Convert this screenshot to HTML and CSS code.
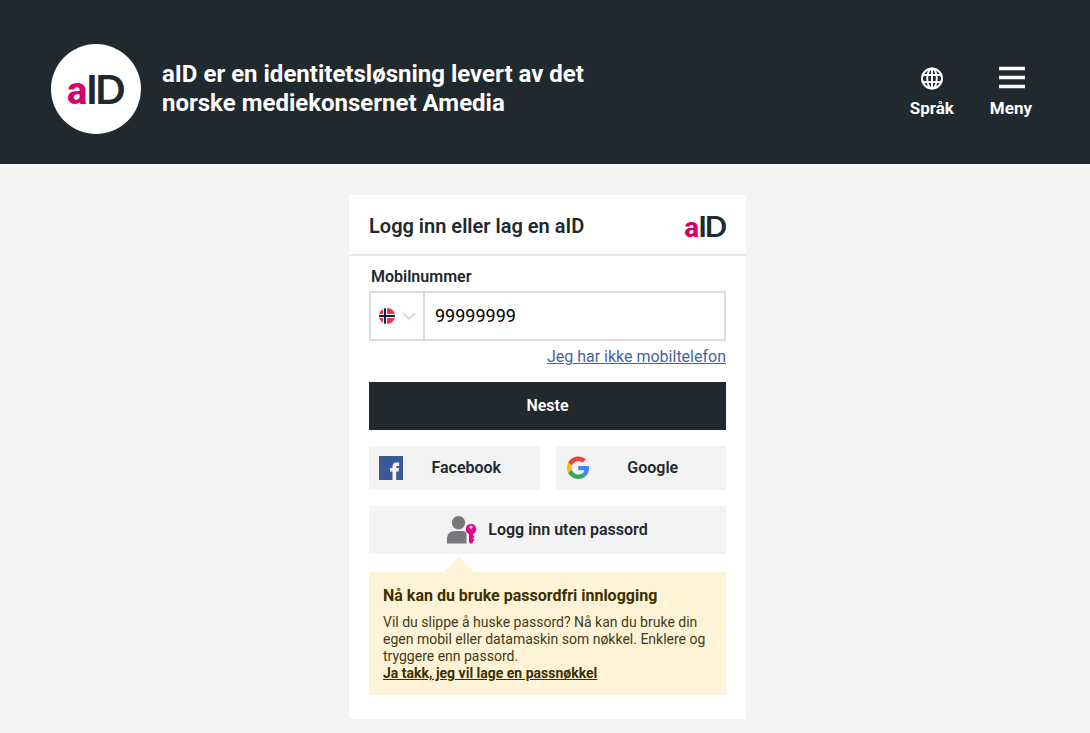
FILE: index.html
```html
<!DOCTYPE html>
<html lang="no">
<head>
<meta charset="utf-8">
<meta name="viewport" content="width=device-width, initial-scale=1">
<title>aID</title>
<link rel="stylesheet" href="styles.css">
</head>
<body>
<header class="site-header">
  <div class="brand">
    <div class="brand-badge">
      <svg class="brand-logo" viewBox="0 0 56 40" role="img" aria-label="aID"><text class="logo-text" y="35"><tspan class="logo-a" x="-1">a</tspan><tspan x="18 27">ID</tspan></text></svg>
    </div>
    <h1 class="brand-title">aID er en identitetsløsning levert av det norske mediekonsernet Amedia</h1>
  </div>
  <nav class="site-nav">
    <button class="nav-button" type="button">
      <svg class="nav-icon" viewBox="0 0 28 28" fill="none" stroke="#fff" stroke-width="2"><circle cx="14" cy="14.500" r="10"/><ellipse cx="14" cy="14.500" rx="4.800" ry="10"/><path d="M14 4.500v20M5 11h18M5 18h18"/></svg>
      <span>Språk</span>
    </button>
    <button class="nav-button" type="button">
      <svg class="nav-icon" viewBox="0 0 28 28" fill="none" stroke="#fff" stroke-width="3.400"><path d="M2 4.500h26M2 13.500h26M2 22.500h26"/></svg>
      <span>Meny</span>
    </button>
  </nav>
</header>
<main class="page">
  <section class="card">
    <div class="card-header">
      <h2 class="card-title">Logg inn eller lag en aID</h2>
      <svg class="card-logo" viewBox="0 0 56 40" role="img" aria-label="aID"><text class="logo-text" y="35"><tspan class="logo-a" x="-1">a</tspan><tspan x="18 27">ID</tspan></text></svg>
    </div>
    <form class="card-body">
      <label class="field-label" for="phone">Mobilnummer</label>
      <div class="phone-field">
        <button class="country" type="button" aria-label="Norge">
          <svg class="flag" viewBox="0 0 16 16"><clipPath id="round"><circle cx="8" cy="8" r="8"/></clipPath><g clip-path="url(#round)"><path fill="#ef3340" d="M0 0h16v16H0z"/><path stroke="#fff" stroke-width="4" d="M6 0v16M0 8h16"/><path stroke="#00205b" stroke-width="2" d="M6 0v16M0 8h16"/></g></svg>
          <svg class="chevron" viewBox="0 0 14 8" fill="none" stroke="#dcdcdc" stroke-width="2"><path d="M1 1l6 6 6-6"/></svg>
        </button>
        <input class="phone-input" id="phone" type="tel" value="99999999">
      </div>
      <a class="no-mobile" href="#">Jeg har ikke mobiltelefon</a>
      <button class="button primary" type="submit">Neste</button>
      <div class="social">
        <button class="button social-button" type="button">
          <svg class="social-icon" viewBox="0 0 24 24"><path fill="#3b5998" d="M0 0h24v24H0z"/><path fill="#f3f3f3" d="M13.500 24v-8.500H11V12h2.500v-1.500c0-2.600 1.500-4 4-4h2.700V10h-1.500c-1.100 0-1.500.5-1.500 1.400v.600h2.900l-.5 3.500h-2.400V24z"/></svg>
          <span class="social-name">Facebook</span>
        </button>
        <button class="button social-button" type="button">
          <svg class="social-icon" viewBox="-2 -1 51 51"><path fill="#ea4335" d="M24 9.500c3.540 0 6.710 1.220 9.210 3.600l6.850-6.850C35.900 2.380 30.470 0 24 0 14.620 0 6.510 5.380 2.560 13.220l7.980 6.190C12.430 13.720 17.740 9.500 24 9.500z"/><path fill="#4285f4" d="M46.980 24.550c0-1.570-.15-3.090-.38-4.550H24v9.020h12.940c-.58 2.960-2.260 5.480-4.780 7.180l7.730 6c4.510-4.180 7.090-10.360 7.090-17.650z"/><path fill="#fbbc05" d="M10.530 28.590a14.500 14.500 0 0 1 0-9.180l-7.980-6.190a24 24 0 0 0 0 21.560z"/><path fill="#34a853" d="M24 48c6.480 0 11.930-2.130 15.890-5.810l-7.730-6c-2.150 1.450-4.920 2.300-8.160 2.300-6.260 0-11.570-4.220-13.470-9.910l-7.980 6.190C6.510 42.620 14.620 48 24 48z"/></svg>
          <span class="social-name">Google</span>
        </button>
      </div>
      <button class="button passkey" type="button">
        <svg class="passkey-icon" viewBox="0 0 30 28"><circle cx="11.500" cy="6.700" r="6.700" fill="#77787b"/><path fill="#77787b" d="M0 27.500V23c0-5 3-8 8-8h7c1.700 0 3 .5 4.500 1.500v11z"/><circle cx="24" cy="13" r="6.200" fill="#f3f3f3"/><path fill="#ec008c" fill-rule="evenodd" d="M24 8a5.200 5.200 0 0 1 2 10v1.500l1.500 1.500-1.500 1.500 1.500 1.500-1.500 1.500V26l-2 2-2-1.800V18A5.200 5.200 0 0 1 24 8zm0 1.500a1.600 1.600 0 1 0 0 3.200 1.600 1.600 0 0 0 0-3.200z"/></svg>
        <span>Logg inn uten passord</span>
      </button>
      <aside class="callout">
        <h3 class="callout-title">Nå kan du bruke passordfri innlogging</h3>
        <p class="callout-text">Vil du slippe å huske passord? Nå kan du bruke din egen mobil eller datamaskin som nøkkel. Enklere og tryggere enn passord.</p>
        <a class="callout-link" href="#">Ja takk, jeg vil lage en passnøkkel</a>
      </aside>
    </form>
  </section>
</main>
</body>
</html>
```
FILE: styles.css
```css
* { box-sizing: border-box; }
body {
  margin: 0;
  background: #f3f3f3;
  color: #20292d;
  font-family: Roboto, "Liberation Sans", sans-serif;
  font-size: 16px;
  line-height: 20px;
}
h1, h2, h3, p { margin: 0; }
button { border: 0; padding: 0; color: inherit; font: inherit; cursor: pointer; }
svg { display: block; flex: none; overflow: visible; }

.site-header {
  display: flex;
  justify-content: space-between;
  align-items: center;
  padding: 44px 58px 30px 51px;
  background: #20292d;
  color: #fff;
}
.brand { display: flex; align-items: center; gap: 21px; }
.brand-badge {
  display: flex;
  flex: none;
  align-items: center;
  justify-content: center;
  width: 90px;
  height: 90px;
  border-radius: 50%;
  background: #fff;
}
.brand-logo { width: 56px; height: 40px; }
.logo-text { font: 700 40px Lato, sans-serif; fill: #20292d; }
.logo-a { font: 800 38px Roboto, sans-serif; fill: #d6006d; }
.brand-title { max-width: 440px; font-size: 24px; line-height: 29px; font-weight: 700; }
.site-nav { display: flex; gap: 36px; padding-top: 4px; }
.nav-button {
  display: flex;
  flex-direction: column;
  align-items: center;
  gap: 6px;
  background: none;
  font-size: 17px;
  font-weight: 700;
}
.nav-icon { width: 28px; height: 28px; }

.page { padding: 31px 16px 14px 21px; }
.card { max-width: 397px; margin: 0 auto; background: #fff; }
.card-header {
  display: flex;
  align-items: center;
  justify-content: space-between;
  padding: 16px 20px 13px;
  border-bottom: 2px solid #e6e6e2;
}
.card-title { font-size: 20px; line-height: 30px; font-weight: 600; }
.card-logo { width: 41px; height: 30px; }
.card-body { display: flex; flex-direction: column; padding: 11px 20px 24px; }
.field-label { padding: 0 2px; margin-bottom: 4px; font-weight: 600; }
.phone-field { display: flex; height: 50px; border: 2px solid #ddd; }
.country {
  display: flex;
  align-items: center;
  gap: 7px;
  padding: 0 7px 0 8px;
  border-right: 2px solid #ddd;
  background: #fff;
}
.flag { width: 16px; height: 16px; }
.chevron { width: 14px; height: 8px; }
.phone-input {
  flex: 1;
  min-width: 0;
  border: 0;
  padding: 0 10px;
  background: #fff;
  color: #000;
  font: inherit;
  font-size: 18px;
}
.no-mobile { align-self: flex-end; margin: 6px 0 15px; color: #44649f; }
.button {
  display: flex;
  align-items: center;
  justify-content: center;
  background: #f3f3f3;
  font-weight: 600;
}
.primary { height: 48px; background: #20292d; color: #fff; }
.social { display: grid; grid-template-columns: 1fr 1fr; gap: 16px; margin: 16px 0; }
.social-button { height: 44px; padding: 0 10px; }
.social-icon { width: 24px; height: 24px; }
.social-name { flex: 1; text-align: center; }
.passkey { gap: 11px; height: 48px; }
.passkey-icon { width: 30px; height: 28px; }
.callout {
  position: relative;
  margin-top: 18px;
  padding: 14px 14px 13px;
  background: #fff3d7;
  color: #423a16;
  font-size: 14px;
  line-height: 17px;
}
.callout::before {
  content: "";
  position: absolute;
  left: 75px;
  bottom: 100%;
  border: 15px solid transparent;
  border-top: 0;
  border-bottom-color: #fff3d7;
}
.callout-title { margin-bottom: 8px; font-size: 16px; line-height: 20px; font-weight: 700; color: #3a3000; }
.callout-link { color: #3a3000; font-weight: 700; }
```
